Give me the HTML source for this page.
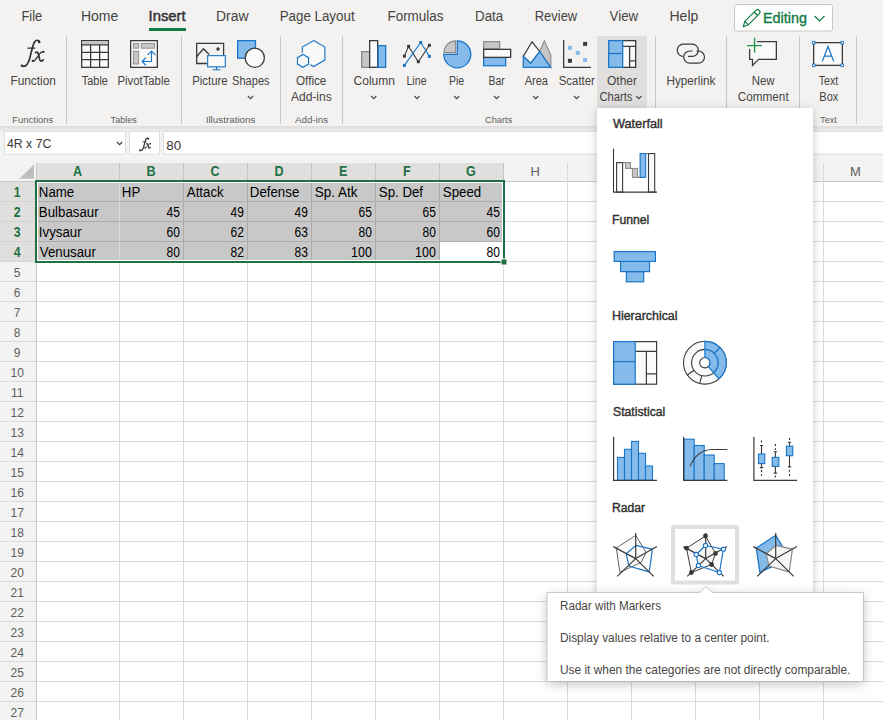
<!DOCTYPE html>
<html><head><meta charset="utf-8"><style>
html,body{margin:0;padding:0;background:#fff;overflow:hidden}
svg{display:block;font-family:"Liberation Sans",sans-serif}
</style></head><body>
<svg font-family="Liberation Sans" width="883" height="720" viewBox="0 0 883 720">
<rect x="0" y="0" width="883" height="126" fill="#f3f2f1" />
<defs><linearGradient id="rsh" x1="0" y1="0" x2="0" y2="1"><stop offset="0" stop-color="#dcdcdc"/><stop offset="1" stop-color="#f0f0f0"/></linearGradient><filter id="psh" x="-20%" y="-20%" width="140%" height="140%"><feDropShadow dx="0" dy="1.5" stdDeviation="4" flood-color="#000" flood-opacity="0.22"/></filter><filter id="tsh" x="-20%" y="-30%" width="140%" height="160%"><feDropShadow dx="0" dy="3" stdDeviation="5.5" flood-color="#000" flood-opacity="0.24"/></filter></defs>
<rect x="0" y="126" width="883" height="6" fill="url(#rsh)" />
<rect x="0" y="132" width="883" height="31" fill="#f3f3f3" />
<text x="21.48" y="21" font-size="14" fill="#444342" textLength="20.72" lengthAdjust="spacingAndGlyphs">File</text>
<text x="80.90" y="21" font-size="14" fill="#444342">Home</text>
<text x="215.90" y="21" font-size="14" fill="#444342">Draw</text>
<text x="279.65" y="21" font-size="14" fill="#444342" textLength="74.95" lengthAdjust="spacingAndGlyphs">Page Layout</text>
<text x="387.44" y="21" font-size="14" fill="#444342" textLength="56.06" lengthAdjust="spacingAndGlyphs">Formulas</text>
<text x="474.94" y="21" font-size="14" fill="#444342" textLength="28.35" lengthAdjust="spacingAndGlyphs">Data</text>
<text x="534.78" y="21" font-size="14" fill="#444342" textLength="42.40" lengthAdjust="spacingAndGlyphs">Review</text>
<text x="609.60" y="21" font-size="14" fill="#444342" textLength="28.56" lengthAdjust="spacingAndGlyphs">View</text>
<text x="669.50" y="21" font-size="14" fill="#444342">Help</text>
<text x="148.54" y="21" font-size="14" fill="#323130" textLength="37.04" lengthAdjust="spacingAndGlyphs" stroke="#323130" stroke-width="0.45">Insert</text>
<rect x="149" y="28" width="37" height="3" fill="#107c41" />
<rect x="734.5" y="4.5" width="98" height="26.5" rx="2" fill="#fff" stroke="#c8c6c4" stroke-width="1"/>
<g fill="none" stroke="#107c41" stroke-width="1.2" stroke-linejoin="round" transform="translate(0.3 0.8)"><path d="M743 26 L744.5 20.5 L755.5 9.5 Q757.5 8 759 9.5 Q760.5 11 759 13 L748 24 Z"/><path d="M753.8 11.2 L757.3 14.7 M744.5 20.5 L748 24"/></g>
<text x="763.01" y="23.3" font-size="14.5" fill="#107c41" textLength="44.06" lengthAdjust="spacingAndGlyphs" stroke="#107c41" stroke-width="0.35">Editing</text>
<path d="M814.5 16 L819.5 21 L824.5 16" fill="none" stroke="#107c41" stroke-width="1.1"/>
<rect x="4.5" y="131.5" width="121" height="22.5" fill="#fff" stroke="#e1dfdd"/>
<rect x="129.5" y="131.5" width="30" height="22.5" fill="#fff" stroke="#e1dfdd"/>
<rect x="163.5" y="131.5" width="725" height="22.5" fill="#fff" stroke="#e1dfdd"/>
<text x="6.90" y="147.8" font-size="13" fill="#3b3a39" textLength="44.57" lengthAdjust="spacingAndGlyphs">4R x 7C</text>
<path d="M117 142 L119.6 144.6 L122.2 142" fill="none" stroke="#3b3a39" stroke-width="1.1"/>
<text x="166.20" y="149.9" font-size="13" fill="#3b3a39" textLength="14.94" lengthAdjust="spacingAndGlyphs">80</text>
<rect x="36" y="182" width="847" height="538" fill="#fff" />
<rect x="0" y="163" width="883" height="18" fill="#f3f3f3" />
<rect x="37" y="163" width="467" height="18" fill="#e1dfdd" />
<rect x="0" y="182" width="36" height="539" fill="#f3f3f3" />
<rect x="0" y="182" width="36" height="80" fill="#e1dfdd" />
<rect x="37" y="182" width="467" height="80" fill="#c8c8c8" />
<rect x="440" y="242" width="63" height="19" fill="#fff" />
<rect x="0" y="181" width="883" height="1" fill="#c8c8c8" />
<rect x="0" y="201" width="883" height="1" fill="#dadada" />
<rect x="0" y="221" width="883" height="1" fill="#dadada" />
<rect x="0" y="241" width="883" height="1" fill="#dadada" />
<rect x="0" y="261" width="883" height="1" fill="#dadada" />
<rect x="0" y="281" width="883" height="1" fill="#dadada" />
<rect x="0" y="301" width="883" height="1" fill="#dadada" />
<rect x="0" y="321" width="883" height="1" fill="#dadada" />
<rect x="0" y="341" width="883" height="1" fill="#dadada" />
<rect x="0" y="361" width="883" height="1" fill="#dadada" />
<rect x="0" y="381" width="883" height="1" fill="#dadada" />
<rect x="0" y="401" width="883" height="1" fill="#dadada" />
<rect x="0" y="421" width="883" height="1" fill="#dadada" />
<rect x="0" y="441" width="883" height="1" fill="#dadada" />
<rect x="0" y="461" width="883" height="1" fill="#dadada" />
<rect x="0" y="481" width="883" height="1" fill="#dadada" />
<rect x="0" y="501" width="883" height="1" fill="#dadada" />
<rect x="0" y="521" width="883" height="1" fill="#dadada" />
<rect x="0" y="541" width="883" height="1" fill="#dadada" />
<rect x="0" y="561" width="883" height="1" fill="#dadada" />
<rect x="0" y="581" width="883" height="1" fill="#dadada" />
<rect x="0" y="601" width="883" height="1" fill="#dadada" />
<rect x="0" y="621" width="883" height="1" fill="#dadada" />
<rect x="0" y="641" width="883" height="1" fill="#dadada" />
<rect x="0" y="661" width="883" height="1" fill="#dadada" />
<rect x="0" y="681" width="883" height="1" fill="#dadada" />
<rect x="0" y="701" width="883" height="1" fill="#dadada" />
<rect x="0" y="721" width="883" height="1" fill="#dadada" />
<rect x="36" y="163" width="1" height="557" fill="#c8c8c8" />
<rect x="119" y="163" width="1" height="557" fill="#dadada" />
<rect x="183" y="163" width="1" height="557" fill="#dadada" />
<rect x="247" y="163" width="1" height="557" fill="#dadada" />
<rect x="311" y="163" width="1" height="557" fill="#dadada" />
<rect x="375" y="163" width="1" height="557" fill="#dadada" />
<rect x="439" y="163" width="1" height="557" fill="#dadada" />
<rect x="503" y="163" width="1" height="557" fill="#dadada" />
<rect x="567" y="163" width="1" height="557" fill="#dadada" />
<rect x="631" y="163" width="1" height="557" fill="#dadada" />
<rect x="695" y="163" width="1" height="557" fill="#dadada" />
<rect x="759" y="163" width="1" height="557" fill="#dadada" />
<rect x="823" y="163" width="1" height="557" fill="#dadada" />
<rect x="887" y="163" width="1" height="557" fill="#dadada" />
<rect x="951" y="163" width="1" height="557" fill="#dadada" />
<rect x="37" y="201" width="466" height="1" fill="#acacac" />
<rect x="37" y="221" width="466" height="1" fill="#acacac" />
<rect x="37" y="241" width="466" height="1" fill="#acacac" />
<rect x="183" y="182" width="1" height="79" fill="#acacac" />
<rect x="247" y="182" width="1" height="79" fill="#acacac" />
<rect x="311" y="182" width="1" height="79" fill="#acacac" />
<rect x="375" y="182" width="1" height="79" fill="#acacac" />
<rect x="439" y="182" width="1" height="79" fill="#acacac" />
<rect x="503" y="182" width="1" height="79" fill="#acacac" />
<rect x="119" y="163" width="1" height="18" fill="#c8c6c4" />
<rect x="183" y="163" width="1" height="18" fill="#c8c6c4" />
<rect x="247" y="163" width="1" height="18" fill="#c8c6c4" />
<rect x="311" y="163" width="1" height="18" fill="#c8c6c4" />
<rect x="375" y="163" width="1" height="18" fill="#c8c6c4" />
<rect x="439" y="163" width="1" height="18" fill="#c8c6c4" />
<rect x="503" y="163" width="1" height="18" fill="#c8c6c4" />
<rect x="0" y="201" width="36" height="1" fill="#d4d4d4" />
<rect x="0" y="221" width="36" height="1" fill="#d4d4d4" />
<rect x="0" y="241" width="36" height="1" fill="#d4d4d4" />
<rect x="0" y="261" width="36" height="1" fill="#d4d4d4" />
<rect x="0" y="281" width="36" height="1" fill="#dadada" />
<rect x="0" y="301" width="36" height="1" fill="#dadada" />
<rect x="0" y="321" width="36" height="1" fill="#dadada" />
<rect x="0" y="341" width="36" height="1" fill="#dadada" />
<rect x="0" y="361" width="36" height="1" fill="#dadada" />
<rect x="0" y="381" width="36" height="1" fill="#dadada" />
<rect x="0" y="401" width="36" height="1" fill="#dadada" />
<rect x="0" y="421" width="36" height="1" fill="#dadada" />
<rect x="0" y="441" width="36" height="1" fill="#dadada" />
<rect x="0" y="461" width="36" height="1" fill="#dadada" />
<rect x="0" y="481" width="36" height="1" fill="#dadada" />
<rect x="0" y="501" width="36" height="1" fill="#dadada" />
<rect x="0" y="521" width="36" height="1" fill="#dadada" />
<rect x="0" y="541" width="36" height="1" fill="#dadada" />
<rect x="0" y="561" width="36" height="1" fill="#dadada" />
<rect x="0" y="581" width="36" height="1" fill="#dadada" />
<rect x="0" y="601" width="36" height="1" fill="#dadada" />
<rect x="0" y="621" width="36" height="1" fill="#dadada" />
<rect x="0" y="641" width="36" height="1" fill="#dadada" />
<rect x="0" y="661" width="36" height="1" fill="#dadada" />
<rect x="0" y="681" width="36" height="1" fill="#dadada" />
<rect x="0" y="701" width="36" height="1" fill="#dadada" />
<path d="M19.3 178.8 L34 178.8 L34 164.5 Z" fill="#bebebe"/>
<text x="73.00" y="176" font-size="14" font-weight="bold" fill="#1e7145" textLength="9.10" lengthAdjust="spacingAndGlyphs">A</text>
<text x="146.50" y="176" font-size="14" font-weight="bold" fill="#1e7145" textLength="9.10" lengthAdjust="spacingAndGlyphs">B</text>
<text x="210.50" y="176" font-size="14" font-weight="bold" fill="#1e7145" textLength="9.10" lengthAdjust="spacingAndGlyphs">C</text>
<text x="274.50" y="176" font-size="14" font-weight="bold" fill="#1e7145" textLength="9.10" lengthAdjust="spacingAndGlyphs">D</text>
<text x="339.00" y="176" font-size="14" font-weight="bold" fill="#1e7145" textLength="8.40" lengthAdjust="spacingAndGlyphs">E</text>
<text x="403.00" y="176" font-size="14" font-weight="bold" fill="#1e7145" textLength="7.70" lengthAdjust="spacingAndGlyphs">F</text>
<text x="466.00" y="176" font-size="14" font-weight="bold" fill="#1e7145" textLength="9.80" lengthAdjust="spacingAndGlyphs">G</text>
<text x="530.50" y="176" font-size="13" fill="#605e5c">H</text>
<text x="597.50" y="176" font-size="13" fill="#605e5c">I</text>
<text x="660.50" y="176" font-size="13" fill="#605e5c">J</text>
<text x="722.50" y="176" font-size="13" fill="#605e5c">K</text>
<text x="787.50" y="176" font-size="13" fill="#605e5c">L</text>
<text x="850.00" y="176" font-size="13" fill="#605e5c">M</text>
<text x="13.70" y="196.7" font-size="14.5" font-weight="bold" fill="#1e7145" textLength="6.85" lengthAdjust="spacingAndGlyphs">1</text>
<text x="13.70" y="216.7" font-size="14.5" font-weight="bold" fill="#1e7145" textLength="6.85" lengthAdjust="spacingAndGlyphs">2</text>
<text x="13.70" y="236.7" font-size="14.5" font-weight="bold" fill="#1e7145" textLength="6.85" lengthAdjust="spacingAndGlyphs">3</text>
<text x="13.70" y="256.7" font-size="14.5" font-weight="bold" fill="#1e7145" textLength="6.85" lengthAdjust="spacingAndGlyphs">4</text>
<text x="13.80" y="277" font-size="12" fill="#605e5c">5</text>
<text x="13.80" y="297" font-size="12" fill="#605e5c">6</text>
<text x="13.80" y="317" font-size="12" fill="#605e5c">7</text>
<text x="13.80" y="337" font-size="12" fill="#605e5c">8</text>
<text x="13.80" y="357" font-size="12" fill="#605e5c">9</text>
<text x="10.46" y="377" font-size="12" fill="#605e5c">10</text>
<text x="10.91" y="397" font-size="12" fill="#605e5c">11</text>
<text x="10.46" y="417" font-size="12" fill="#605e5c">12</text>
<text x="10.46" y="437" font-size="12" fill="#605e5c">13</text>
<text x="10.46" y="457" font-size="12" fill="#605e5c">14</text>
<text x="10.46" y="477" font-size="12" fill="#605e5c">15</text>
<text x="10.46" y="497" font-size="12" fill="#605e5c">16</text>
<text x="10.46" y="517" font-size="12" fill="#605e5c">17</text>
<text x="10.46" y="537" font-size="12" fill="#605e5c">18</text>
<text x="10.46" y="557" font-size="12" fill="#605e5c">19</text>
<text x="10.46" y="577" font-size="12" fill="#605e5c">20</text>
<text x="10.46" y="597" font-size="12" fill="#605e5c">21</text>
<text x="10.46" y="617" font-size="12" fill="#605e5c">22</text>
<text x="10.46" y="637" font-size="12" fill="#605e5c">23</text>
<text x="10.46" y="657" font-size="12" fill="#605e5c">24</text>
<text x="10.46" y="677" font-size="12" fill="#605e5c">25</text>
<text x="10.46" y="697" font-size="12" fill="#605e5c">26</text>
<text x="10.46" y="717" font-size="12" fill="#605e5c">27</text>
<text x="38.85" y="197" font-size="14" fill="#000" textLength="35.40" lengthAdjust="spacingAndGlyphs">Name</text>
<text x="121.85" y="197" font-size="14" fill="#000" textLength="18.44" lengthAdjust="spacingAndGlyphs">HP</text>
<text x="186.80" y="197" font-size="14" fill="#000" textLength="36.88" lengthAdjust="spacingAndGlyphs">Attack</text>
<text x="249.85" y="197" font-size="14" fill="#000" textLength="49.43" lengthAdjust="spacingAndGlyphs">Defense</text>
<text x="314.80" y="197" font-size="14" fill="#000" textLength="42.78" lengthAdjust="spacingAndGlyphs">Sp. Atk</text>
<text x="378.80" y="197" font-size="14" fill="#000" textLength="44.26" lengthAdjust="spacingAndGlyphs">Sp. Def</text>
<text x="442.80" y="197" font-size="14" fill="#000" textLength="38.38" lengthAdjust="spacingAndGlyphs">Speed</text>
<text x="38.85" y="217" font-size="14" fill="#000" textLength="59.76" lengthAdjust="spacingAndGlyphs">Bulbasaur</text>
<text x="166.52" y="217" font-size="14" fill="#000" textLength="13.39" lengthAdjust="spacingAndGlyphs">45</text>
<text x="230.52" y="217" font-size="14" fill="#000" textLength="13.39" lengthAdjust="spacingAndGlyphs">49</text>
<text x="294.52" y="217" font-size="14" fill="#000" textLength="13.39" lengthAdjust="spacingAndGlyphs">49</text>
<text x="358.52" y="217" font-size="14" fill="#000" textLength="13.39" lengthAdjust="spacingAndGlyphs">65</text>
<text x="422.52" y="217" font-size="14" fill="#000" textLength="13.39" lengthAdjust="spacingAndGlyphs">65</text>
<text x="486.52" y="217" font-size="14" fill="#000" textLength="13.39" lengthAdjust="spacingAndGlyphs">45</text>
<text x="38.85" y="237" font-size="14" fill="#000" textLength="42.78" lengthAdjust="spacingAndGlyphs">Ivysaur</text>
<text x="166.52" y="237" font-size="14" fill="#000" textLength="13.39" lengthAdjust="spacingAndGlyphs">60</text>
<text x="230.52" y="237" font-size="14" fill="#000" textLength="13.39" lengthAdjust="spacingAndGlyphs">62</text>
<text x="294.52" y="237" font-size="14" fill="#000" textLength="13.39" lengthAdjust="spacingAndGlyphs">63</text>
<text x="358.52" y="237" font-size="14" fill="#000" textLength="13.39" lengthAdjust="spacingAndGlyphs">80</text>
<text x="422.52" y="237" font-size="14" fill="#000" textLength="13.39" lengthAdjust="spacingAndGlyphs">80</text>
<text x="486.52" y="237" font-size="14" fill="#000" textLength="13.39" lengthAdjust="spacingAndGlyphs">60</text>
<text x="39.80" y="257" font-size="14" fill="#000" textLength="56.08" lengthAdjust="spacingAndGlyphs">Venusaur</text>
<text x="166.52" y="257" font-size="14" fill="#000" textLength="13.39" lengthAdjust="spacingAndGlyphs">80</text>
<text x="230.52" y="257" font-size="14" fill="#000" textLength="13.39" lengthAdjust="spacingAndGlyphs">82</text>
<text x="294.52" y="257" font-size="14" fill="#000" textLength="13.39" lengthAdjust="spacingAndGlyphs">83</text>
<text x="351.12" y="257" font-size="14" fill="#000" textLength="20.79" lengthAdjust="spacingAndGlyphs">100</text>
<text x="415.12" y="257" font-size="14" fill="#000" textLength="20.79" lengthAdjust="spacingAndGlyphs">100</text>
<text x="486.52" y="257" font-size="14" fill="#000" textLength="13.39" lengthAdjust="spacingAndGlyphs">80</text>
<rect x="36" y="181" width="468" height="81" fill="none" stroke="#1e7145" stroke-width="2"/>
<rect x="37.5" y="182.5" width="465" height="78" fill="none" stroke="#fff" stroke-width="1" />
<rect x="501" y="259" width="6" height="6" fill="#1e7145" stroke="#fff" stroke-width="1"/>
<rect x="597" y="36" width="50" height="72" fill="#e1dfdd" />
<rect x="66" y="36" width="1" height="88" fill="#c8c6c4" />
<rect x="181" y="36" width="1" height="88" fill="#c8c6c4" />
<rect x="280" y="36" width="1" height="88" fill="#c8c6c4" />
<rect x="342" y="36" width="1" height="88" fill="#c8c6c4" />
<rect x="655" y="36" width="1" height="88" fill="#c8c6c4" />
<rect x="726" y="36" width="1" height="88" fill="#c8c6c4" />
<rect x="799" y="36" width="1" height="88" fill="#c8c6c4" />
<rect x="856" y="36" width="1" height="88" fill="#c8c6c4" />
<text x="10.40" y="85" font-size="12" fill="#444342" textLength="45.57" lengthAdjust="spacingAndGlyphs">Function</text>
<text x="81.80" y="85" font-size="12" fill="#444342" textLength="26.10" lengthAdjust="spacingAndGlyphs">Table</text>
<text x="117.50" y="85" font-size="12" fill="#444342" textLength="52.19" lengthAdjust="spacingAndGlyphs">PivotTable</text>
<text x="192.20" y="85" font-size="12" fill="#444342" textLength="35.39" lengthAdjust="spacingAndGlyphs">Picture</text>
<text x="232.00" y="85" font-size="12" fill="#444342" textLength="37.60" lengthAdjust="spacingAndGlyphs">Shapes</text>
<text x="296.00" y="85" font-size="12" fill="#444342" textLength="30.38" lengthAdjust="spacingAndGlyphs">Office</text>
<text x="353.60" y="85" font-size="12" fill="#444342">Column</text>
<text x="406.40" y="85" font-size="12" fill="#444342" textLength="20.31" lengthAdjust="spacingAndGlyphs">Line</text>
<text x="448.90" y="85" font-size="12" fill="#444342" textLength="15.21" lengthAdjust="spacingAndGlyphs">Pie</text>
<text x="488.50" y="85" font-size="12" fill="#444342" textLength="16.20" lengthAdjust="spacingAndGlyphs">Bar</text>
<text x="524.70" y="85" font-size="12" fill="#444342" textLength="23.30" lengthAdjust="spacingAndGlyphs">Area</text>
<text x="558.75" y="85" font-size="12" fill="#444342" textLength="36.15" lengthAdjust="spacingAndGlyphs">Scatter</text>
<text x="607.00" y="85" font-size="12" fill="#444342">Other</text>
<text x="666.40" y="85" font-size="12" fill="#444342" textLength="49.02" lengthAdjust="spacingAndGlyphs">Hyperlink</text>
<text x="751.70" y="85" font-size="12" fill="#444342" textLength="22.98" lengthAdjust="spacingAndGlyphs">New</text>
<text x="818.70" y="85" font-size="12" fill="#444342" textLength="19.51" lengthAdjust="spacingAndGlyphs">Text</text>
<text x="291.00" y="101" font-size="12" fill="#444342">Add-ins</text>
<text x="599.40" y="101" font-size="12" fill="#444342" textLength="33.00" lengthAdjust="spacingAndGlyphs">Charts</text>
<text x="737.80" y="101" font-size="12" fill="#444342" textLength="50.85" lengthAdjust="spacingAndGlyphs">Comment</text>
<text x="819.30" y="101" font-size="12" fill="#444342" textLength="19.00" lengthAdjust="spacingAndGlyphs">Box</text>
<text x="12.20" y="123.2" font-size="9.6" fill="#605e5c" textLength="41.10" lengthAdjust="spacingAndGlyphs">Functions</text>
<text x="110.60" y="123.2" font-size="9.6" fill="#605e5c" textLength="26.21" lengthAdjust="spacingAndGlyphs">Tables</text>
<text x="205.70" y="123.2" font-size="9.6" fill="#605e5c" textLength="49.79" lengthAdjust="spacingAndGlyphs">Illustrations</text>
<text x="295.00" y="123.2" font-size="9.6" fill="#605e5c" textLength="33.09" lengthAdjust="spacingAndGlyphs">Add-ins</text>
<text x="485.00" y="123.2" font-size="9.6" fill="#605e5c" textLength="27.30" lengthAdjust="spacingAndGlyphs">Charts</text>
<text x="820.10" y="123.2" font-size="9.6" fill="#605e5c" textLength="16.68" lengthAdjust="spacingAndGlyphs">Text</text>
<path d="M247.9 96.0 L250.5 98.6 L253.1 96.0" fill="none" stroke="#444342" stroke-width="1.1"/>
<path d="M371.1 96.0 L373.7 98.6 L376.3 96.0" fill="none" stroke="#444342" stroke-width="1.1"/>
<path d="M414.4 96.0 L417.0 98.6 L419.6 96.0" fill="none" stroke="#444342" stroke-width="1.1"/>
<path d="M454.1 96.0 L456.7 98.6 L459.3 96.0" fill="none" stroke="#444342" stroke-width="1.1"/>
<path d="M494.0 96.0 L496.6 98.6 L499.2 96.0" fill="none" stroke="#444342" stroke-width="1.1"/>
<path d="M533.1 96.0 L535.7 98.6 L538.3 96.0" fill="none" stroke="#444342" stroke-width="1.1"/>
<path d="M574.0 96.0 L576.6 98.6 L579.2 96.0" fill="none" stroke="#444342" stroke-width="1.1"/>
<path d="M636.2 96.0 L638.8 98.6 L641.4 96.0" fill="none" stroke="#444342" stroke-width="1.1"/>
<g transform=""><g fill="none" stroke="#323130" stroke-linecap="round"><path d="M39.4 42 C38.8 39.8 36.2 39.6 34.6 42 C32.6 45 31.2 53 29.8 58 C28.4 63 26.4 67.8 22 66" stroke-width="1.7"/><path d="M27.9 48.2 H34.8" stroke-width="1.2"/><path d="M35.6 52.6 Q37.6 50.8 38.5 54.5 L39.7 59.6 Q40.5 62.6 43.2 59.9" stroke-width="1.7"/><path d="M43.8 51.8 Q41.6 51 38.4 55.6 L35.2 59.8 Q34 61.6 32.6 61" stroke-width="1.2"/></g><g fill="#323130"><circle cx="39.1" cy="41.9" r="1.3"/><circle cx="22" cy="65.7" r="1.3"/><circle cx="43.4" cy="51.8" r="1.1"/><circle cx="32.7" cy="60.9" r="1.1"/></g></g>
<g transform="translate(129.5 118.7) scale(0.48)"><g fill="none" stroke="#3b3a39" stroke-linecap="round"><path d="M39.4 42 C38.8 39.8 36.2 39.6 34.6 42 C32.6 45 31.2 53 29.8 58 C28.4 63 26.4 67.8 22 66" stroke-width="2.635"/><path d="M27.9 48.2 H34.8" stroke-width="1.8599999999999999"/><path d="M35.6 52.6 Q37.6 50.8 38.5 54.5 L39.7 59.6 Q40.5 62.6 43.2 59.9" stroke-width="2.635"/><path d="M43.8 51.8 Q41.6 51 38.4 55.6 L35.2 59.8 Q34 61.6 32.6 61" stroke-width="1.8599999999999999"/></g><g fill="#3b3a39"><circle cx="39.1" cy="41.9" r="2.015"/><circle cx="22" cy="65.7" r="2.015"/><circle cx="43.4" cy="51.8" r="1.7050000000000003"/><circle cx="32.7" cy="60.9" r="1.7050000000000003"/></g></g>
<g fill="none" stroke="#3b3a39" stroke-width="1.3"><rect x="81.65" y="40.65" width="26.7" height="26.7" fill="#fafafa"/><rect x="82.3" y="41.3" width="25.4" height="3.3" fill="#c8c6c4" stroke="none"/><path d="M81.65 44.8 H108.35 M81.65 52.3 H108.35 M81.65 59.6 H108.35 M90.6 44.8 V67.35 M99.6 44.8 V67.35"/></g>
<g stroke="#3b3a39" stroke-width="1.3"><rect x="130.65" y="40.65" width="26.7" height="26.7" fill="#fafafa"/></g><g fill="#c8c6c4" stroke="#8a8886" stroke-width="0.9"><rect x="133.4" y="43.4" width="5.3" height="4.8"/><rect x="141.3" y="43.4" width="13.3" height="4.8"/><rect x="133.4" y="51.2" width="5.3" height="12.8"/></g><g fill="none" stroke="#1a76c8" stroke-width="1.15" stroke-linecap="round" stroke-linejoin="round"><path d="M142.3 61.5 H151.5 V51.2"/><path d="M145.6 58 L142.2 61.5 L145.6 65"/><path d="M148 54.6 L151.5 51.1 L155 54.6"/></g>
<g fill="none" stroke="#3b3a39" stroke-width="1.3"><path d="M207 63.5 H196.65 V43.3 H223.6 V55"/><path d="M196.65 56.5 L203.5 48.8 L209.2 54.5"/></g><circle cx="218" cy="49" r="1.7" fill="#3b3a39"/><g stroke="#1a76c8" stroke-width="1.15" fill="#fafafa"><rect x="207.65" y="55.65" width="17.7" height="11.2"/><path d="M216.5 66.85 V69.6 M212.5 69.7 H220.5" fill="none"/></g>
<rect x="237.65" y="40.65" width="17.8" height="17.6" fill="#84bbea" stroke="#1a76c8" stroke-width="1.3"/><circle cx="254.8" cy="57.8" r="9.6" fill="#fafafa" stroke="#3b3a39" stroke-width="1.3"/>
<g fill="none" stroke="#1a76c8" stroke-width="1.15"><path d="M313.60 40.60 L324.86 47.10 L324.86 60.10 L313.60 66.60 L302.34 60.10 L302.34 47.10 Z" fill="#f9f9f9"/><path d="M303.00 54.50 L308.54 57.70 L308.54 64.10 L303.00 67.30 L297.46 64.10 L297.46 57.70 Z" fill="#f9f9f9" stroke="#f3f2f1" stroke-width="3.6"/><path d="M303.00 54.50 L308.54 57.70 L308.54 64.10 L303.00 67.30 L297.46 64.10 L297.46 57.70 Z" fill="#f9f9f9"/></g>
<rect x="361.65" y="51.65" width="8" height="15.7" fill="#c8c6c4" stroke="#8a8886" stroke-width="1.3"/><rect x="369.65" y="40.65" width="8" height="26.7" fill="#fafafa" stroke="#3b3a39" stroke-width="1.3"/><rect x="378.15" y="45.65" width="7.5" height="21.7" fill="#84bbea" stroke="#1a76c8" stroke-width="1.3"/>
<path d="M404.4 56.1 L408.6 46.4 L418.3 61.7 L429.4 45.3" fill="none" stroke="#3b3a39" stroke-width="1.1"/><path d="M404.4 65.4 L420.7 42.5 L429.4 56.4" fill="none" stroke="#1a76c8" stroke-width="1.1"/>
<rect x="402.9" y="54.6" width="3" height="3" fill="#3b3a39" />
<rect x="407.1" y="44.9" width="3" height="3" fill="#3b3a39" />
<rect x="416.8" y="60.2" width="3" height="3" fill="#3b3a39" />
<rect x="427.9" y="43.8" width="3" height="3" fill="#3b3a39" />
<rect x="402.9" y="63.9" width="3" height="3" fill="#1a76c8" />
<rect x="419.2" y="41.0" width="3" height="3" fill="#1a76c8" />
<rect x="427.9" y="54.9" width="3" height="3" fill="#1a76c8" />
<path d="M457.3 54.3 V40.8 A13.5 13.5 0 1 1 443.8 54.3 Z" fill="#84bbea" stroke="#1a76c8" stroke-width="1.3"/><path d="M455.6 52.6 H443.9 A12 12 0 0 1 455.6 40.9 Z" fill="#c8c6c4" stroke="#8a8886" stroke-width="1.1"/>
<rect x="483.65" y="41.65" width="16" height="7.3" fill="#c8c6c4" stroke="#8a8886" stroke-width="1.2"/><rect x="483.65" y="57.5" width="22" height="8.2" fill="#84bbea" stroke="#1a76c8" stroke-width="1.3"/><rect x="483.65" y="49.35" width="27" height="8" fill="#fafafa" stroke="#3b3a39" stroke-width="1.3"/>
<path d="M539.7 51.5 L544.4 40.8 L550.8 55 L550.8 67.4 Z" fill="#c8c6c4" stroke="#8a8886" stroke-width="1.1"/><path d="M523.3 56.4 L532 41.8 L539.7 51.5 L530.6 63.3 Z" fill="#fafafa" stroke="#3b3a39" stroke-width="1.2"/><path d="M523.3 56.4 L530.6 63.3 L539.7 51.5 L550.6 67.3 L523.3 67.3 Z" fill="#84bbea" stroke="#1a76c8" stroke-width="1.3"/>
<path d="M563.65 40 V67.35 H591" fill="none" stroke="#3b3a39" stroke-width="1.3"/>
<rect x="567.9" y="45.8" width="4" height="4" fill="#84bbea" />
<rect x="575.8" y="50.9" width="4" height="4" fill="#84bbea" />
<rect x="583.1" y="57.9" width="4" height="4" fill="#84bbea" />
<rect x="583.1" y="41.9" width="4" height="4" fill="#3b3a39" />
<rect x="567.9" y="58.8" width="4" height="4" fill="#3b3a39" />
<rect x="608.65" y="40.65" width="27" height="26.7" fill="#fafafa" stroke="#3b3a39" stroke-width="1.3"/><path d="M622.6 46.4 H635.65 M629.6 46.4 V67.35 M629.6 60.8 H635.65" fill="none" stroke="#3b3a39" stroke-width="1.3"/><rect x="608.65" y="40.65" width="14" height="26.7" fill="#84bbea" stroke="#1a76c8" stroke-width="1.3"/><path d="M608.65 53.5 H622.65" stroke="#1a76c8" stroke-width="1.3"/>
<g fill="none" stroke="#3b3a39" stroke-width="1.2" stroke-linecap="round"><path d="M682.8 56.4 H683.4 A6.15 6.15 0 0 1 683.4 44.1 H692.2 A6.15 6.15 0 0 1 692.2 56.4 H688.5"/><path d="M696.8 51 H698.4 A6.1 6.1 0 0 1 698.4 63.2 H689.8 A6.1 6.1 0 0 1 689.8 51 H692"/></g>
<path d="M757 41.65 H776.35 V59.35 H758.6 L752.5 65.5 V59.35 H749.65 V49" fill="#fafafa" stroke="#3b3a39" stroke-width="1.3"/><path d="M747 45.6 H762 M754.6 37.8 V52.5" stroke="#1f9a4a" stroke-width="1.4"/>
<rect x="813.65" y="42.65" width="28.7" height="22.7" fill="#fafafa" stroke="#3b3a39" stroke-width="1.3"/>
<rect x="812.35" y="41.35" width="2.6" height="2.6" fill="#fff" stroke="#1a76c8" stroke-width="0.9"/>
<rect x="841.05" y="41.35" width="2.6" height="2.6" fill="#fff" stroke="#1a76c8" stroke-width="0.9"/>
<rect x="812.35" y="64.05" width="2.6" height="2.6" fill="#fff" stroke="#1a76c8" stroke-width="0.9"/>
<rect x="841.05" y="64.05" width="2.6" height="2.6" fill="#fff" stroke="#1a76c8" stroke-width="0.9"/>
<path d="M822.3 61.4 L828 46.6 L833.7 61.4 M824.3 56.2 H831.7" fill="none" stroke="#1a76c8" stroke-width="1.25"/>
<rect x="597" y="108" width="216" height="500" rx="2" fill="#fff" filter="url(#psh)"/>
<text x="613.00" y="127.8" font-size="12.3" fill="#323130" textLength="49.66" lengthAdjust="spacingAndGlyphs" stroke="#323130" stroke-width="0.4">Waterfall</text>
<text x="612.01" y="223.7" font-size="12.3" fill="#323130" textLength="37.32" lengthAdjust="spacingAndGlyphs" stroke="#323130" stroke-width="0.4">Funnel</text>
<text x="611.99" y="320.2" font-size="12.3" fill="#323130" textLength="65.55" lengthAdjust="spacingAndGlyphs" stroke="#323130" stroke-width="0.4">Hierarchical</text>
<text x="613.00" y="416" font-size="12.3" fill="#323130" textLength="52.33" lengthAdjust="spacingAndGlyphs" stroke="#323130" stroke-width="0.4">Statistical</text>
<text x="612.01" y="512.2" font-size="12.3" fill="#323130" textLength="33.08" lengthAdjust="spacingAndGlyphs" stroke="#323130" stroke-width="0.4">Radar</text>
<g stroke="#3b3a39" stroke-width="1.1" fill="#fafafa"><rect x="616.6" y="162.6" width="6" height="29.5"/><rect x="648.5" y="153.6" width="6.2" height="38.5"/></g><path d="M622.6 162.6 H625.5 M630.5 168.4 H632.4 M637.6 177.4 H640.1 M645.7 153.6 H648.5" stroke="#605e5c" stroke-width="0.9" fill="none"/><g stroke="#8a8886" stroke-width="1" fill="#c8c6c4"><rect x="625.5" y="162.6" width="5" height="5.8"/><rect x="632.4" y="168.4" width="5.2" height="9"/></g><rect x="640.1" y="153.6" width="5.6" height="23.8" fill="#84bbea" stroke="#1a76c8" stroke-width="1.1"/><path d="M613.5 148.8 V192.1 H657" fill="none" stroke="#3b3a39" stroke-width="1.1"/>
<g fill="#84bbea" stroke="#1a76c8" stroke-width="1.2"><rect x="626.4" y="271.6" width="17.3" height="10.2"/><rect x="620.6" y="261.4" width="28.9" height="10.2"/><rect x="614.2" y="251.6" width="41.2" height="9.8"/></g>
<rect x="613.6" y="341.6" width="43" height="42.6" fill="#fafafa" stroke="#3b3a39" stroke-width="1.2"/><path d="M635 351.4 H656.6 M646.4 351.4 V384.2 M646.4 373.8 H656.6" fill="none" stroke="#3b3a39" stroke-width="1.2"/><rect x="613.6" y="341.6" width="21.6" height="42.6" fill="#84bbea" stroke="#1a76c8" stroke-width="1.2"/><path d="M613.6 361.6 H635.2" stroke="#1a76c8" stroke-width="1.2"/>
<g fill="#fafafa" stroke="#3b3a39" stroke-width="1.1"><circle cx="704.9" cy="362.7" r="21.4"/><circle cx="704.9" cy="362.7" r="13.3"/><circle cx="704.9" cy="362.7" r="5.2" fill="#fff"/><path d="M701.71 375.51 L699.70 383.56 M694.09 370.27 L687.29 375.03"/></g><g fill="#84bbea" stroke="#1a76c8" stroke-width="1.2"><path d="M704.90 349.40 A13.3 13.3 0 0 1 713.63 372.74 L708.31 366.62 A5.2 5.2 0 0 0 704.90 357.50 Z"/><path d="M704.90 341.30 A21.4 21.4 0 0 1 720.03 347.57 L714.30 353.30 A13.3 13.3 0 0 0 704.90 349.40 Z"/><path d="M720.03 347.57 A21.4 21.4 0 0 1 718.94 378.85 L713.63 372.74 A13.3 13.3 0 0 0 714.30 353.30 Z"/></g>
<g fill="#84bbea" stroke="#1a76c8" stroke-width="1.1"><rect x="617.5" y="457.4" width="7" height="23"/><rect x="624.5" y="449.3" width="7" height="31"/><rect x="631.5" y="441.4" width="7" height="39"/><rect x="638.5" y="453.3" width="7" height="27"/><rect x="645.5" y="466" width="7" height="14.4"/></g><path d="M613.6 436.8 V480.4 H657" fill="none" stroke="#3b3a39" stroke-width="1.2"/>
<g fill="#84bbea" stroke="#1a76c8" stroke-width="1.1"><rect x="684.2" y="439.2" width="10" height="41.2"/><rect x="694.2" y="445.5" width="10" height="34.9"/><rect x="704.2" y="455" width="10" height="25.4"/><rect x="714.2" y="463.6" width="10" height="16.8"/></g><path d="M683.6 436.8 V480.4 H727.4" fill="none" stroke="#3b3a39" stroke-width="1.2"/><path d="M690 466.4 Q697 450 712 449.5 H727.4" fill="none" stroke="#3b3a39" stroke-width="1.1"/>
<path d="M753.9 436.8 V480.4 H797.1" fill="none" stroke="#3b3a39" stroke-width="1.2"/><g stroke="#3b3a39" stroke-width="1.1" fill="none"><path d="M761.5 445.5 V467.6 M759.8 445.5 H763.2 M759.8 467.6 H763.2"/><path d="M775.4 451.7 V473.1 M773.7 451.7 H777.1 M773.7 473.1 H777.1"/><path d="M789.5 442.3 V466.9 M787.8 442.3 H791.2 M787.8 466.9 H791.2"/></g><g stroke="#3b3a39" stroke-width="1.2" stroke-dasharray="2 2.2" fill="none"><path d="M761.5 440.6 V444 M761.5 470 V476"/><path d="M775.4 444 V450 M775.4 475.4 V478.5"/><path d="M789.5 438 V441 M789.5 469.8 V476"/></g><g fill="#84bbea" stroke="#1a76c8" stroke-width="1.1"><rect x="758.5" y="454" width="6.3" height="9.6"/><rect x="772.2" y="457.4" width="6.6" height="9"/><rect x="786.4" y="446.2" width="6.4" height="9.5"/></g>
<path d="M635.70 535.30 L646.10 552.50 L641.10 562.40 L619.90 572.30 L616.30 548.00 Z" fill="#fafafa" stroke="#605e5c" stroke-width="0.95"/><path d="M636.10 545.30 L652.40 549.30 L649.20 571.90 L628.90 566.00 L626.20 553.80 Z" fill="none" stroke="#1a76c8" stroke-width="1.2"/>
<g stroke="#3b3a39" stroke-width="1.2"><path d="M635.7 558.6 L635.7 533.1"/><path d="M635.7 558.6 L656.9 546.6"/><path d="M635.7 558.6 L653.7 576.4"/><path d="M635.7 558.6 L617.2 576.4"/><path d="M635.7 558.6 L613.3 546.6"/></g>
<rect x="673" y="527" width="64" height="55.6" rx="1" fill="#fff" stroke="#e1dfdd" stroke-width="4"/>
<path d="M705.50 536.00 L715.50 553.50 L711.60 564.50 L691.40 572.50 L686.50 548.20 Z" fill="#f7f7f7" stroke="#3b3a39" stroke-width="1"/>
<g stroke="#3b3a39" stroke-width="1.2"><path d="M705.7 558.6 L705.7 533.1"/><path d="M705.7 558.6 L726.9 546.6"/><path d="M705.7 558.6 L723.7 576.4"/><path d="M705.7 558.6 L687.2 576.4"/><path d="M705.7 558.6 L683.3 546.6"/></g>
<path d="M705.50 545.50 L723.40 549.20 L719.40 572.50 L698.40 565.50 L696.20 554.50 Z" fill="none" stroke="#1a76c8" stroke-width="1.2"/>
<circle cx="705.5" cy="536" r="2.4" fill="#3b3a39"/>
<circle cx="686.5" cy="548.2" r="2.4" fill="#3b3a39"/>
<circle cx="715.5" cy="553.5" r="2.4" fill="#3b3a39"/>
<circle cx="711.6" cy="564.5" r="2.4" fill="#3b3a39"/>
<circle cx="691.4" cy="572.5" r="2.4" fill="#3b3a39"/>
<circle cx="705.5" cy="545.5" r="2.1" fill="#fff" stroke="#1a76c8" stroke-width="1.1"/>
<circle cx="723.4" cy="549.2" r="2.1" fill="#fff" stroke="#1a76c8" stroke-width="1.1"/>
<circle cx="719.4" cy="572.5" r="2.1" fill="#fff" stroke="#1a76c8" stroke-width="1.1"/>
<circle cx="698.4" cy="565.5" r="2.1" fill="#fff" stroke="#1a76c8" stroke-width="1.1"/>
<circle cx="696.2" cy="554.5" r="2.1" fill="#fff" stroke="#1a76c8" stroke-width="1.1"/>
<path d="M775.70 535.30 L786.10 552.50 L781.10 562.40 L759.90 572.30 L756.30 548.00 Z" fill="#84bbea" stroke="#1a76c8" stroke-width="1.3"/><path d="M776.10 545.30 L792.40 549.30 L789.20 571.90 L768.90 566.00 L766.20 553.80 Z" fill="#f7f7f7" stroke="#8a8886" stroke-width="1.2"/>
<g stroke="#3b3a39" stroke-width="1.2"><path d="M775.7 558.6 L775.7 533.1"/><path d="M775.7 558.6 L796.9 546.6"/><path d="M775.7 558.6 L793.7 576.4"/><path d="M775.7 558.6 L757.2 576.4"/><path d="M775.7 558.6 L753.3 546.6"/></g>
<g filter="url(#tsh)"><path d="M547 592.5 H700 L706 586.5 L712 592.5 H863.5 V681 H547 Z" fill="#fff"/></g>
<path d="M547 681 V592.5 H700 L706 586.5 L712 592.5 H863.5 V681" fill="none" stroke="#c8c6c4" stroke-width="1"/>
<text x="560.00" y="610.2" font-size="12" fill="#484644" textLength="101.00" lengthAdjust="spacingAndGlyphs">Radar with Markers</text>
<text x="560.00" y="642.2" font-size="12" fill="#484644" textLength="209.53" lengthAdjust="spacingAndGlyphs">Display values relative to a center point.</text>
<text x="560.00" y="674.3" font-size="12" fill="#484644" textLength="290.33" lengthAdjust="spacingAndGlyphs">Use it when the categories are not directly comparable.</text>
</svg>
</body></html>
